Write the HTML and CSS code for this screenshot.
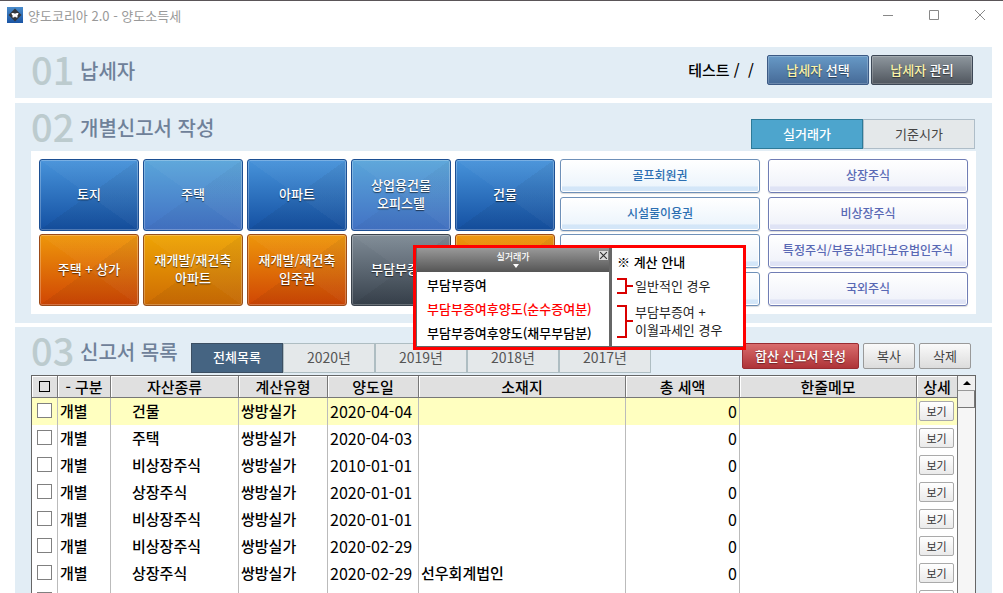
FILE: index.html
```
<!DOCTYPE html>
<html lang="ko">
<head>
  <meta charset="UTF-8">
  <meta name="viewport" content="width=device-width, initial-scale=1">
  <title>양도코리아 2.0 - 양도소득세</title>
  <link rel="stylesheet" href="styles.css">
</head>
<body>
  <header class="titlebar">
    <svg class="app-icon" viewBox="0 0 16 16" aria-hidden="true">
      <defs>
        <linearGradient id="iconBg" x1="0" y1="0" x2="0" y2="1">
          <stop offset="0" stop-color="#4a8ccb"/>
          <stop offset="1" stop-color="#1a55a4"/>
        </linearGradient>
      </defs>
      <rect width="16" height="16" fill="url(#iconBg)"/>
      <path d="M8 1.5 14.5 8 8 14.5 1.5 8Z" fill="#33373c"/>
      <path d="M4.5 6H6.500L7 6.600H9L9.500 6H11.500L11 8H10.500V10.500H9L8 9.500 7 10.500H5.500V8H5Z" fill="#fff"/>
    </svg>
    <span class="app-title">양도코리아 2.0 - 양도소득세</span>
    <div class="window-buttons">
      <button aria-label="최소화"><svg viewBox="0 0 12 12"><path d="M1 6.500H11"/></svg></button>
      <button aria-label="최대화"><svg viewBox="0 0 12 12"><path d="M1.500 1.500H10.500V10.500H1.500Z"/></svg></button>
      <button aria-label="닫기"><svg viewBox="0 0 12 12"><path d="M1 1 11 11M11 1 1 11"/></svg></button>
    </div>
  </header>

  <main>
    <section class="panel taxpayer">
      <h2><span class="num">01</span>납세자</h2>
      <div class="taxpayer-info">
        <span class="taxpayer-name">테스트 /&nbsp; /</span>
        <button class="btn btn-select"><em>납세자</em> 선택</button>
        <button class="btn btn-manage"><em>납세자</em> 관리</button>
      </div>
    </section>

    <section class="panel report">
      <div class="panel-head">
        <h2><span class="num">02</span>개별신고서 작성</h2>
        <div class="price-tabs">
          <button class="active">실거래가</button>
          <button>기준시가</button>
        </div>
      </div>

      <div class="assets">
        <div class="tiles">
          <button class="tile blue">토지</button>
          <button class="tile sky">주택</button>
          <button class="tile blue">아파트</button>
          <button class="tile sky">상업용건물<br>오피스텔</button>
          <button class="tile blue">건물</button>
          <button class="tile orange">주택 + 상가</button>
          <button class="tile amber">재개발/재건축<br>아파트</button>
          <button class="tile orange">재개발/재건축<br>입주권</button>
          <button class="tile gray">부담부증여</button>
          <button class="tile orange" aria-label="기타"></button>
        </div>
        <div class="slim-list">
          <button class="slim">골프회원권</button>
          <button class="slim">시설물이용권</button>
          <button class="slim" aria-label="기타 자산"></button>
          <button class="slim" aria-label="기타 권리"></button>
        </div>
        <div class="slim-list stocks">
          <button class="slim">상장주식</button>
          <button class="slim">비상장주식</button>
          <button class="slim">특정주식/부동산과다보유법인주식</button>
          <button class="slim">국외주식</button>
        </div>

        <div class="popup">
          <div class="popup-menu">
            <div class="popup-head">
              실거래가
              <svg class="caret" viewBox="0 0 6 4" aria-hidden="true"><path d="M0 0H6L3 4Z"/></svg>
              <button class="popup-close" aria-label="닫기"><svg viewBox="0 0 8 8"><path d="M1 1 7 7M7 1 1 7"/></svg></button>
            </div>
            <a href="#">부담부증여</a>
            <a href="#" class="hot">부담부증여후양도(순수증여분)</a>
            <a href="#">부담부증여후양도(채무부담분)</a>
          </div>
          <div class="popup-guide">
            <h3>※ 계산 안내</h3>
            <div class="guide-item">
              <svg width="17" height="16" viewBox="0 0 17 16" aria-hidden="true"><path d="M0 1H9V15H0M9 8H16"/></svg>
              <p>일반적인 경우</p>
            </div>
            <div class="guide-item">
              <svg width="17" height="33" viewBox="0 0 17 33" aria-hidden="true"><path d="M0 1H9V32H0M9 16H16"/></svg>
              <p>부담부증여 +<br>이월과세인 경우</p>
            </div>
          </div>
        </div>
      </div>
    </section>

    <section class="panel list">
      <div class="panel-head">
        <h2><span class="num">03</span>신고서 목록</h2>
        <div class="year-tabs">
          <button class="active">전체목록</button>
          <button>2020년</button>
          <button>2019년</button>
          <button>2018년</button>
          <button>2017년</button>
        </div>
        <div class="list-actions">
          <button class="btn-sum">합산 신고서 작성</button>
          <button class="btn-plain">복사</button>
          <button class="btn-plain">삭제</button>
        </div>
      </div>

      <div class="table-box">
        <div class="table-scroll">
          <table>
            <colgroup>
              <col class="c-check">
              <col class="c-type">
              <col class="c-asset">
              <col class="c-calc">
              <col class="c-date">
              <col class="c-addr">
              <col class="c-tax">
              <col class="c-memo">
              <col class="c-view">
            </colgroup>
            <thead>
              <tr>
                <th><input type="checkbox" aria-label="전체 선택"></th>
                <th>- 구분</th>
                <th>자산종류</th>
                <th>계산유형</th>
                <th>양도일</th>
                <th>소재지</th>
                <th>총 세액</th>
                <th>한줄메모</th>
                <th>상세</th>
              </tr>
            </thead>
            <tbody>
              <tr class="selected">
                <td class="check"><input type="checkbox" aria-label="건물 2020-04-04"></td>
                <td>개별</td><td class="asset">건물</td><td>쌍방실가</td><td class="date">2020-04-04</td><td></td><td class="tax">0</td><td></td>
                <td class="view"><button>보기</button></td>
              </tr>
              <tr>
                <td class="check"><input type="checkbox" aria-label="주택 2020-04-03"></td>
                <td>개별</td><td class="asset">주택</td><td>쌍방실가</td><td class="date">2020-04-03</td><td></td><td class="tax">0</td><td></td>
                <td class="view"><button>보기</button></td>
              </tr>
              <tr>
                <td class="check"><input type="checkbox" aria-label="비상장주식 2010-01-01"></td>
                <td>개별</td><td class="asset">비상장주식</td><td>쌍방실가</td><td class="date">2010-01-01</td><td></td><td class="tax">0</td><td></td>
                <td class="view"><button>보기</button></td>
              </tr>
              <tr>
                <td class="check"><input type="checkbox" aria-label="상장주식 2020-01-01"></td>
                <td>개별</td><td class="asset">상장주식</td><td>쌍방실가</td><td class="date">2020-01-01</td><td></td><td class="tax">0</td><td></td>
                <td class="view"><button>보기</button></td>
              </tr>
              <tr>
                <td class="check"><input type="checkbox" aria-label="비상장주식 2020-01-01"></td>
                <td>개별</td><td class="asset">비상장주식</td><td>쌍방실가</td><td class="date">2020-01-01</td><td></td><td class="tax">0</td><td></td>
                <td class="view"><button>보기</button></td>
              </tr>
              <tr>
                <td class="check"><input type="checkbox" aria-label="비상장주식 2020-02-29"></td>
                <td>개별</td><td class="asset">비상장주식</td><td>쌍방실가</td><td class="date">2020-02-29</td><td></td><td class="tax">0</td><td></td>
                <td class="view"><button>보기</button></td>
              </tr>
              <tr>
                <td class="check"><input type="checkbox" aria-label="상장주식 2020-02-29"></td>
                <td>개별</td><td class="asset">상장주식</td><td>쌍방실가</td><td class="date">2020-02-29</td><td>선우회계법인</td><td class="tax">0</td><td></td>
                <td class="view"><button>보기</button></td>
              </tr>
              <tr>
                <td class="check"><input type="checkbox" aria-label="다음 항목"></td>
                <td></td><td></td><td></td><td></td><td></td><td></td><td></td>
                <td class="view"><button aria-label="보기"></button></td>
              </tr>
            </tbody>
          </table>
        </div>
        <div class="scrollbar">
          <button class="scroll-up" aria-label="위로"><svg viewBox="0 0 8 4"><path d="M0 4 4 0 8 4Z"/></svg></button>
          <div class="scroll-thumb"></div>
        </div>
      </div>
    </section>
  </main>
</body>
</html>
```

FILE: styles.css
```
* {
  box-sizing: border-box;
}
body {
  display: flex;
  flex-direction: column;
  height: 100vh;
  margin: 0;
  overflow: hidden;
  background: #fff;
  border-top: 1px solid #5a5558;
  font-family: 'Noto Sans CJK KR', sans-serif;
  font-size: 13px;
  color: #000;
}
button {
  margin: 0;
  padding: 0;
  font-family: inherit;
  font-size: 13px;
  line-height: 18px;
  cursor: pointer;
}
h2, h3, p {
  margin: 0;
}

/* title bar */
.titlebar {
  display: flex;
  align-items: center;
  flex: none;
  height: 28px;
  padding: 0 12px 0 7px;
}
.app-icon {
  width: 16px;
  height: 16px;
}
.app-title {
  margin-left: 5px;
  color: #999;
}
.window-buttons {
  display: flex;
  gap: 34px;
  margin-left: auto;
  padding-right: 5px;
}
.window-buttons button {
  width: 12px;
  height: 12px;
  border: none;
  background: none;
}
.window-buttons svg {
  display: block;
  width: 12px;
  height: 12px;
  fill: none;
  stroke: #888;
}

/* panels */
main {
  display: flex;
  flex-direction: column;
  flex: 1;
  min-height: 0;
  gap: 4px;
  padding: 18px 11px 0 15px;
}
.panel {
  flex: none;
  padding: 0 16px;
  background: #e2edf5;
}
.panel h2 {
  display: flex;
  align-items: flex-start;
  font-size: 20px;
  font-weight: 500;
  line-height: 50px;
  color: #6f8199;
}
.panel .num {
  width: 49px;
  font-size: 38px;
  line-height: 46px;
  color: #bccbce;
}
.panel-head {
  display: flex;
  height: 48px;
}
.taxpayer {
  display: flex;
  justify-content: space-between;
  height: 51px;
  margin-bottom: 1px;
}
.taxpayer h2 {
  line-height: 48px;
}
.taxpayer .num {
  line-height: 44px;
}
.taxpayer-info {
  display: flex;
  align-items: center;
  gap: 2px;
  padding: 0 3px 6px 0;
}
.taxpayer-name {
  margin-right: 11px;
  font-size: 15px;
  font-weight: 500;
}
.btn {
  width: 102px;
  height: 30px;
  border-radius: 2px;
  color: #fff;
  font-weight: 500;
  text-shadow: 0 1px 1px rgba(0,0,0,0.5);
}
.btn em {
  font-style: normal;
  color: #fbf3a8;
}
.btn-select {
  border: 1px solid #3c5a85;
  background: linear-gradient(#6799c6, #466a97);
  box-shadow: inset 0 0 0 1px rgba(255,255,255,0.2);
}
.btn-manage {
  border: 1px solid #3d4856;
  background: linear-gradient(#8e979e, #50565e);
  box-shadow: inset 0 0 0 1px rgba(255,255,255,0.2);
}
.price-tabs {
  display: flex;
  margin: 16px 1px 0 auto;
}
.price-tabs button {
  width: 112px;
  height: 30px;
  border: 1px solid #aebdc8;
  background: #e4e8ea;
  color: #444;
}
.price-tabs .active {
  border-color: #2d7a98;
  background: #4da5cd;
  color: #fff;
  font-weight: 500;
}

/* asset buttons */
.report {
  padding-bottom: 9px;
}
.assets {
  position: relative;
  display: grid;
  grid-template-columns: 516fr 205fr 208fr;
  padding: 8px;
  background: #fff;
}
.tiles {
  display: grid;
  grid-template-columns: repeat(5, 1fr);
  gap: 3px 4px;
}
.tile {
  height: 72px;
  padding-bottom: 2px;
  border: 1px solid #1c4f93;
  border-radius: 3px;
  box-shadow: inset 0 0 0 1px rgba(255,255,255,0.25);
  color: #fff;
  font-weight: 500;
  text-shadow: 0 1px 1px rgba(0,0,0,0.6);
}
.blue {
  background: linear-gradient(to top right, transparent 50%, rgba(255,255,255,0.03) 50%), linear-gradient(to top left, rgba(0,0,0,0.05) 50%, transparent 50%), linear-gradient(#4793da, #1450a2);
}
.sky {
  background: linear-gradient(to top right, transparent 50%, rgba(255,255,255,0.03) 50%), linear-gradient(to top left, rgba(0,0,0,0.03) 50%, transparent 50%), linear-gradient(#5aa5da, #4272c4);
}
.orange {
  border-color: #9c4a17;
  background: linear-gradient(to top right, transparent 50%, rgba(255,255,255,0.03) 50%), linear-gradient(to top left, rgba(0,0,0,0.05) 50%, transparent 50%), linear-gradient(#ee960a, #d04604);
}
.amber {
  border-color: #96501c;
  background: linear-gradient(to top right, transparent 50%, rgba(255,255,255,0.03) 50%), linear-gradient(to top left, rgba(0,0,0,0.05) 50%, transparent 50%), linear-gradient(#eea404, #ce6c04);
}
.gray {
  border-color: #3a424c;
  background: linear-gradient(to top right, transparent 50%, rgba(255,255,255,0.03) 50%), linear-gradient(to top left, rgba(0,0,0,0.05) 50%, transparent 50%), linear-gradient(#7e8a95, #38424d);
}
.slim-list {
  display: flex;
  flex-direction: column;
  justify-content: space-between;
  padding-left: 5px;
}
.stocks {
  padding-left: 8px;
}
.slim {
  height: 34px;
  padding-bottom: 2px;
  border: 1px solid #6e90b8;
  border-radius: 3px;
  background: linear-gradient(#fff, #edf5fc 80%, #d3e6f8 85%, #d3e6f8);
  box-shadow: inset 0 0 0 1px #fff, 0 1px 1px rgba(0,0,0,0.15);
  color: #2c6fb2;
  font-size: 12px;
  font-weight: 500;
}
.stocks .slim {
  border-color: #707db5;
  background: linear-gradient(#fff, #f1f3fa 80%, #dfe3f5 85%, #dfe3f5);
  color: #5868b4;
}

/* popup menu over the asset buttons */
.popup {
  position: absolute;
  left: 382px;
  top: 94px;
  z-index: 10;
  display: flex;
  width: 333px;
  height: 105px;
  border: 3px solid #ff0000;
  background: #fff;
}
.popup-menu {
  flex: none;
  width: 196px;
  border: solid #666;
  border-width: 0 3px 1px 1px;
}
.popup-head {
  position: relative;
  height: 24px;
  margin-bottom: 1px;
  background: linear-gradient(#999, #555);
  color: #fff;
  font-size: 9px;
  font-weight: 500;
  line-height: 17px;
  text-align: center;
}
.caret {
  position: absolute;
  left: 50%;
  bottom: 4px;
  width: 6px;
  height: 4px;
  fill: #fff;
}
.popup-close {
  position: absolute;
  top: 3px;
  right: 1px;
  width: 9px;
  height: 9px;
  border: none;
  background: #ddd;
}
.popup-close svg {
  display: block;
  width: 9px;
  height: 9px;
  stroke: #333;
}
.popup-menu a {
  display: block;
  padding-left: 10px;
  color: #000;
  font-weight: 500;
  line-height: 24px;
  text-decoration: none;
}
.popup-menu .hot {
  color: #ff0000;
}
.popup-guide {
  flex: 1;
  padding: 3px 0 0 5px;
  border-bottom: 1px solid #666;
}
.popup-guide h3 {
  font-size: 13px;
  font-weight: 500;
  line-height: 22px;
}
.guide-item {
  display: flex;
  align-items: center;
  gap: 1px;
  margin-bottom: 8px;
  line-height: 18px;
  white-space: nowrap;
  color: #222;
}
.guide-item svg {
  flex: none;
  fill: none;
  stroke: #d90000;
  stroke-width: 2;
}
.popup-guide h3 + .guide-item {
  margin-top: 4px;
}

/* report list */
.list {
  display: flex;
  flex-direction: column;
  flex: 1;
  min-height: 0;
}
.list .panel-head {
  flex: none;
}
.list h2 {
  width: 160px;
}
.year-tabs {
  display: flex;
  margin-top: 16px;
}
.year-tabs button {
  width: 92px;
  height: 30px;
  padding-bottom: 2px;
  border: 1px solid #aebdc2;
  background: #e4e8ea;
  color: #555;
  font-size: 14px;
}
.year-tabs .active {
  border-color: #3c4f63;
  background: #456482;
  color: #fff;
  font-size: 13px;
  font-weight: 500;
}
.list-actions {
  display: flex;
  gap: 4px;
  margin: 16px 5px 0 auto;
}
.list-actions button {
  height: 26px;
  border: 1px solid #999;
  border-radius: 2px;
}
.list-actions .btn-plain {
  width: 52px;
  background: linear-gradient(#fafafa, #dcdcdc);
  color: #444;
}
.list-actions .btn-sum {
  width: 117px;
  border-color: #982c32;
  background: linear-gradient(#d96c6c, #ae3338);
  color: #fff;
  font-weight: 500;
  text-shadow: 0 1px 1px rgba(0,0,0,0.4);
}
.table-box {
  display: flex;
  flex: 1;
  min-height: 0;
  border: 1px solid #666;
  border-bottom: none;
  background: #fff;
}
.table-scroll {
  flex: 1;
  min-width: 0;
  overflow: hidden;
}
table {
  width: 100%;
  table-layout: fixed;
  border-collapse: separate;
  border-spacing: 0;
  font-size: 15px;
  font-weight: 500;
}
.c-check { width: 26px; }
.c-type { width: 53px; }
.c-asset { width: 128px; }
.c-calc { width: 89px; }
.c-date { width: 91px; }
.c-addr { width: 207px; }
.c-tax { width: 114px; }
.c-view { width: 41px; }
th {
  height: 22px;
  padding: 0;
  border-right: 1px solid #777;
  border-bottom: 1px solid #777;
  background: #e0e0e0;
  box-shadow: inset 1px 1px 0 #fff;
  font-weight: 500;
  line-height: 20px;
}
td {
  height: 27px;
  padding: 0 2px 2px;
  border-right: 1px solid #bbb;
  line-height: 24px;
  white-space: nowrap;
}
th:last-child, td:last-child {
  border-right-color: #777;
}
.selected td {
  background: #ffffc0;
}
td.asset {
  padding-left: 21px;
}
td.date, td.tax {
  font-size: 16px;
  font-weight: 400;
}
td.tax {
  text-align: right;
}
td.check {
  padding: 0 0 2px 5px;
}
td.view {
  padding-bottom: 1px;
}
input[type="checkbox"] {
  display: block;
  width: 15px;
  height: 15px;
  margin: 0;
  appearance: none;
  border: 1px solid #808080;
  background: #fff;
}
th input[type="checkbox"] {
  width: 11px;
  height: 11px;
  margin: 0 auto;
  border-color: #000;
  background: none;
}
.view button {
  display: block;
  width: 35px;
  height: 20px;
  border: 1px solid #aaa;
  border-radius: 2px;
  background: linear-gradient(#fff, #eaeaea);
  color: #333;
  font-size: 11px;
  line-height: 16px;
}
.scrollbar {
  flex: none;
  width: 17px;
  background: #f6f6f6;
}
.scroll-up {
  display: flex;
  align-items: center;
  justify-content: center;
  width: 17px;
  height: 15px;
  border: none;
  border-bottom: 1px solid #999;
  background: #f0f0f0;
}
.scroll-up svg {
  width: 8px;
  height: 4px;
}
.scroll-thumb {
  height: 17px;
  border-right: 1px solid #777;
  border-bottom: 1px solid #777;
  background: #efefef;
}
```
